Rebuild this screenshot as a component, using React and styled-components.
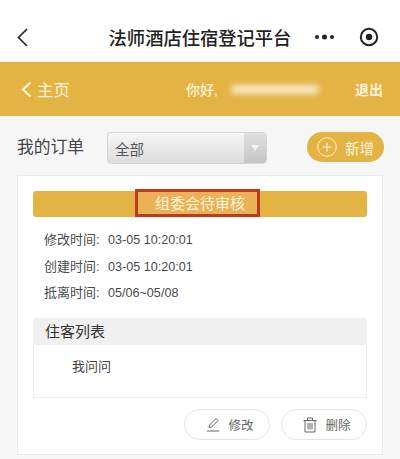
import styled, { createGlobalStyle } from "styled-components";

const GlobalStyle = createGlobalStyle`
  html, body {
    margin: 0;
    padding: 0;
    background: #f6f6f6;
  }
  body {
    font-family: "Liberation Sans", "Noto Sans CJK SC", sans-serif;
  }
`;

const Page = styled.div`
  width: 400px;
  height: 459px;
  overflow: hidden;
  display: flex;
  flex-direction: column;
`;

const NavBar = styled.div`
  height: 62px;
  flex: none;
  background: #fff;
  display: grid;
  grid-template-columns: 100px 1fr 100px;
  align-items: center;
  padding-top: 12px;
  box-sizing: border-box;
`;

const NavBack = styled.svg`
  width: 11px;
  height: 19px;
  margin-left: 17px;
`;

const NavTitle = styled.div`
  font-size: 18.3px;
  font-weight: 500;
  color: #222;
  text-align: center;
  white-space: nowrap;
`;

const NavActions = styled.div`
  display: flex;
  align-items: center;
  justify-content: flex-end;
  gap: 25px;
  padding-right: 21px;
`;

const Header = styled.div`
  height: 54px;
  flex: none;
  background: #e3b344;
  display: flex;
  align-items: center;
  color: #fdf3dc;
  padding: 0 17px 0 21px;
  box-sizing: border-box;
`;

const HomeLink = styled.div`
  display: flex;
  align-items: center;
  gap: 5px;
  font-size: 16.4px;
  width: 165px;
`;

const Greeting = styled.div`
  font-size: 14px;
  font-weight: 500;
  display: flex;
  align-items: center;
  flex: 1;
`;

const BlurredName = styled.span`
  display: block;
  width: 88px;
  height: 9px;
  margin-left: 13px;
  background: #f8e8c8;
  border-radius: 4px;
  filter: blur(3px);
`;

const Logout = styled.div`
  font-size: 14px;
  font-weight: 700;
`;

const Toolbar = styled.div`
  display: flex;
  align-items: flex-start;
  padding: 16px 16px 0 17px;
  height: 59px;
  flex: none;
  box-sizing: border-box;
`;

const ToolbarLabel = styled.div`
  font-size: 16.8px;
  line-height: 32px;
  color: #444;
  width: 90px;
`;

const Select = styled.div`
  width: 160px;
  height: 32px;
  box-sizing: border-box;
  border: 1px solid #d5d5d5;
  border-radius: 4px;
  background: linear-gradient(#f6f6f6, #dcdcdc);
  display: flex;
  align-items: center;
  justify-content: space-between;
  font-size: 14.5px;
  color: #555;
  padding-left: 7px;
  overflow: hidden;
`;

const SelectArrow = styled.div`
  width: 22px;
  height: 100%;
  background: linear-gradient(#e0e0e0, #c4c4c4);
  display: flex;
  align-items: center;
  justify-content: center;
  &::after {
    content: "";
    border-left: 4px solid transparent;
    border-right: 4px solid transparent;
    border-top: 6px solid #f4f4f4;
  }
`;

const AddButton = styled.div`
  margin-left: auto;
  width: 77px;
  height: 30px;
  border-radius: 15px;
  background: #e3b344;
  color: #fdf3dc;
  font-size: 14.5px;
  display: flex;
  align-items: center;
  gap: 8px;
  padding-left: 10px;
  box-sizing: border-box;
`;

const Card = styled.div`
  width: 366px;
  height: 280px;
  flex: none;
  margin-left: 17px;
  box-sizing: border-box;
  background: #fff;
  border: 1px solid #ebebeb;
  padding: 15px 15px 0;
  display: flex;
  flex-direction: column;
`;

const StatusBar = styled.div`
  height: 26px;
  flex: none;
  border-radius: 3px;
  background: #e3b344;
  display: flex;
  justify-content: center;
  align-items: center;
`;

const StatusText = styled.div`
  height: 28px;
  box-sizing: border-box;
  margin: -2px 5px 0 0;
  padding: 0 12px 0 17px;
  border: 3px solid #bd3a1e;
  background: #eab256;
  color: #fdf3dc;
  font-size: 15px;
  line-height: 24px;
  white-space: nowrap;
`;

const InfoList = styled.div`
  margin-top: 10px;
  padding-left: 11px;
  height: 91px;
  flex: none;
`;

const InfoRow = styled.div`
  height: 26.5px;
  line-height: 26.5px;
  display: flex;
  align-items: baseline;
  font-size: 12.6px;
  color: #4a4a4a;
  white-space: nowrap;
`;

const InfoKey = styled.span`
  width: 64px;
  font-size: 13px;
`;

const GuestBox = styled.div`
  height: 80px;
  flex: none;
  box-sizing: border-box;
  border: 1px solid #ececec;
  border-top: none;
`;

const GuestHead = styled.div`
  height: 27px;
  margin: 0 -1px;
  background: #f0f0f0;
  font-size: 15px;
  line-height: 27px;
  padding-left: 12px;
  color: #333;
`;

const GuestName = styled.div`
  font-size: 13px;
  color: #444;
  padding: 11px 0 0 38px;
`;

const ActionRow = styled.div`
  display: flex;
  justify-content: flex-end;
  gap: 11px;
  margin-top: 11px;
`;

const PillButton = styled.div`
  width: 86px;
  height: 31px;
  box-sizing: border-box;
  border: 1px solid #e4e4e4;
  border-radius: 16px;
  display: flex;
  align-items: center;
  justify-content: center;
  gap: 8px;
  padding-left: 6px;
  font-size: 12.5px;
  color: #666;
`;

const orderTimes = [
  ["修改时间:", "03-05 10:20:01"],
  ["创建时间:", "03-05 10:20:01"],
  ["抵离时间:", "05/06~05/08"],
];

export default function App() {
  return (
    <Page>
      <GlobalStyle />
      <NavBar>
        <NavBack viewBox="0 0 11 19" fill="none" stroke="#222" strokeWidth="1.6">
          <path d="M10 1 1.5 9.5 10 18" />
        </NavBack>
        <NavTitle>法师酒店住宿登记平台</NavTitle>
        <NavActions>
          <svg width="19" height="8" viewBox="0 0 19 8" fill="#222">
            <circle cx="2" cy="4" r="2" />
            <circle cx="9.5" cy="4" r="2.5" />
            <circle cx="17" cy="4" r="2" />
          </svg>
          <svg width="20" height="20" viewBox="0 0 20 20">
            <circle cx="10" cy="10" r="8.2" fill="none" stroke="#222" strokeWidth="2" />
            <circle cx="10" cy="10" r="3.2" fill="#222" />
          </svg>
        </NavActions>
      </NavBar>
      <Header>
        <HomeLink>
          <svg width="11" height="17" viewBox="0 0 11 17" fill="none" stroke="#fdf3dc" strokeWidth="2.2">
            <path d="M9.5 1.5 2 8.5l7.5 7" />
          </svg>
          主页
        </HomeLink>
        <Greeting>
          你好,
          <BlurredName />
        </Greeting>
        <Logout>退出</Logout>
      </Header>
      <Toolbar>
        <ToolbarLabel>我的订单</ToolbarLabel>
        <Select>
          全部
          <SelectArrow />
        </Select>
        <AddButton>
          <svg width="20" height="20" viewBox="0 0 20 20" fill="none" stroke="#fdf3dc" strokeWidth="1">
            <circle cx="10" cy="10" r="9.3" />
            <path d="M10 5.5v9M5.5 10h9" />
          </svg>
          新增
        </AddButton>
      </Toolbar>
      <Card>
        <StatusBar>
          <StatusText>组委会待审核</StatusText>
        </StatusBar>
        <InfoList>
          {orderTimes.map(([key, value]) => (
            <InfoRow key={key}>
              <InfoKey>{key}</InfoKey>
              {value}
            </InfoRow>
          ))}
        </InfoList>
        <GuestBox>
          <GuestHead>住客列表</GuestHead>
          <GuestName>我问问</GuestName>
        </GuestBox>
        <ActionRow>
          <PillButton>
            <svg width="14" height="15" viewBox="0 0 14 15" fill="none" stroke="#666" strokeWidth="1">
              <path d="M3 10.5 3.6 8 10 1.5l2 2L5.6 10z" />
              <path d="M1 14h12" />
            </svg>
            修改
          </PillButton>
          <PillButton>
            <svg width="14" height="16" viewBox="0 0 14 16" fill="none" stroke="#666" strokeWidth="1">
              <path d="M0.5 3.5h13M4.5 3.5V1h5v2.5M2 3.5V15h10V3.5M5 6v6.5M7 6v6.5M9 6v6.5" />
            </svg>
            删除
          </PillButton>
        </ActionRow>
      </Card>
    </Page>
  );
}
